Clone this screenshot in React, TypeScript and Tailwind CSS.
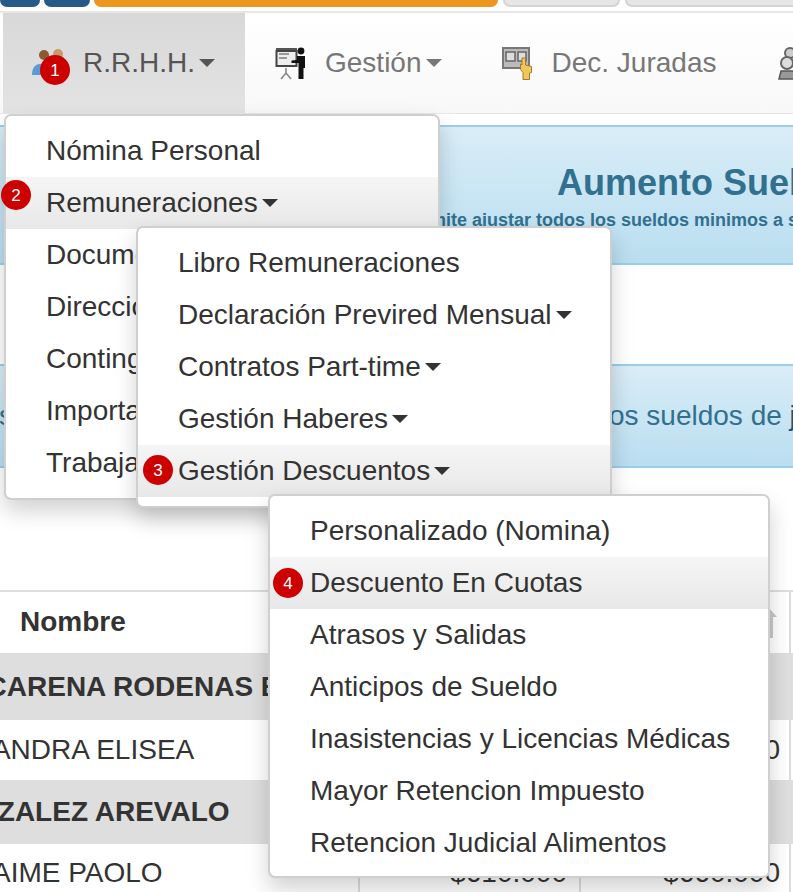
import React from "react";

const FONT = "font-['Liberation_Sans','Arial',sans-serif]";

function Caret({ color = "border-t-[#333]" }: { color?: string }) {
  return <span className={`inline-block ml-[4px] w-0 h-0 border-x-[8px] border-t-[8px] border-x-transparent align-middle ${color}`} />;
}

function Badge({ n, className }: { n: number; className: string }) {
  return (
    <span className={`absolute flex items-center justify-center w-[30px] h-[30px] rounded-full bg-[#cc0000] text-white text-[17px] leading-none ${className}`}>
      {n}
    </span>
  );
}

function PeopleIcon() {
  return (
    <svg width="36" height="30" viewBox="0 0 36 30" className="-ml-[1px]">
      <circle cx="12" cy="7" r="5" fill="#8a5a33" />
      <circle cx="26" cy="6" r="5" fill="#c99a6b" />
      <path d="M0 27c0-7 3-11 8-11s9 4 9 11z" fill="#5a9bd5" />
      <path d="M18 14h14v10H18z" fill="#d9b38c" />
    </svg>
  );
}

function BoardIcon() {
  return (
    <svg width="32" height="33" viewBox="0 0 32 33">
      <rect x="1" y="1" width="21" height="3" fill="#555" />
      <rect x="1.5" y="4" width="20" height="15" fill="#eee" stroke="#444" strokeWidth="2" />
      <path d="M4 7h10M4 11h8" stroke="#999" strokeWidth="2" />
      <path d="M11 21v5M11 26l-5 6M11 26l5 6" stroke="#888" strokeWidth="1.6" fill="none" />
      <circle cx="26" cy="4" r="3.4" fill="#111" />
      <path d="M22 9h8v12h-1.500v11h-5V16l-7 0v-2.500l5.500-.5z" fill="#111" />
    </svg>
  );
}

function HandIcon() {
  return (
    <svg width="32" height="33" viewBox="0 0 32 33">
      <rect x="1" y="1" width="26" height="20" fill="#bbb" stroke="#777" strokeWidth="2" />
      <rect x="4" y="5" width="9" height="9" fill="#ddd" stroke="#666" strokeWidth="1.500" />
      <rect x="16" y="5" width="8" height="9" fill="#ddd" stroke="#666" strokeWidth="1.500" />
      <path d="M20 11h3.500v7l6 1.500v6l-2 .5v6.500H21v-7l-2.500-3V17l1.500 1z" fill="#f2c55f" stroke="#a27d28" strokeWidth="1" />
    </svg>
  );
}

function GearIcon() {
  return (
    <svg width="17" height="33" viewBox="0 0 17 33" className="ml-[2px]">
      <circle cx="12" cy="6" r="5" fill="#ccc" stroke="#666" strokeWidth="2" />
      <circle cx="9" cy="16" r="6" fill="#ddd" stroke="#666" strokeWidth="2" />
      <path d="M3 24h14v8H1z" fill="#999" stroke="#555" strokeWidth="1.500" />
    </svg>
  );
}

function NavItem({ icon, label, caret, active }: { icon: React.ReactNode; label: string; caret?: boolean; active?: boolean }) {
  return (
    <div className={`flex items-center h-full px-[30px] shrink-0 ${active ? "bg-gradient-to-b from-[#d8d8d8] to-[#e3e3e3] text-[#555]" : "text-[#777]"}`}>
      <span className="w-[50px] shrink-0 flex items-center">{icon}</span>
      <span className="whitespace-nowrap">{label}</span>
      {caret && <Caret color={active ? "border-t-[#555]" : "border-t-[#777]"} />}
    </div>
  );
}

function MenuItem({ label, caret, active, badge }: { label: string; caret?: boolean; active?: boolean; badge?: React.ReactNode }) {
  return (
    <div className={`relative h-[52px] flex items-center pl-[40px] whitespace-nowrap ${active ? "bg-gradient-to-b from-[#f5f5f5] to-[#e8e8e8]" : ""}`}>
      {badge}
      {label}
      {caret && <Caret />}
    </div>
  );
}

function Menu({ className, children }: { className: string; children: React.ReactNode }) {
  return (
    <div className={`absolute bg-white border-2 border-[#cfcfcf] rounded-[7px] shadow-[0_11px_22px_rgba(0,0,0,0.18)] text-[28px] text-[#333] ${className}`}>
      {children}
    </div>
  );
}

function Row({ name, bold, h, v1, v2 }: { name: React.ReactNode; bold?: boolean; h: string; v1?: string; v2?: string }) {
  return (
    <div className={`grid grid-cols-[358px_221px_210px_1fr] text-[28px] text-[#333] ${h} ${bold ? "bg-[#dedede] font-bold" : "bg-white"}`}>
      <div className="overflow-hidden whitespace-nowrap flex items-center">{name}</div>
      <div className={`flex items-center justify-end pr-[12px] border-l-2 ${bold ? "border-transparent" : "border-[#ddd]"}`}>{v1}</div>
      <div className={`flex items-center justify-end pr-[9px] border-l-2 ${bold ? "border-transparent" : "border-[#ddd]"}`}>{v2}</div>
      <div className={`border-l-2 ${bold ? "border-transparent" : "border-[#ddd]"}`} />
    </div>
  );
}

export default function App() {
  return (
    <div className={`relative w-[793px] h-[892px] overflow-hidden bg-white ${FONT}`}>
      <div className="flex h-[7px]">
        <div className="w-[40px] shrink-0 bg-[#265a88] rounded-b-[7px]" />
        <div className="w-[46px] shrink-0 ml-[4px] bg-[#265a88] rounded-b-[7px]" />
        <div className="w-[404px] shrink-0 ml-[4px] bg-[#ec971f] rounded-b-[7px]" />
        <div className="w-[117px] shrink-0 ml-[5px] bg-[#e6e6e6] border-x-2 border-b-2 border-[#d4d4d4] rounded-b-[7px]" />
        <div className="w-[180px] shrink-0 ml-[5px] bg-[#e6e6e6] border-x-2 border-b-2 border-[#d4d4d4] rounded-b-[7px]" />
      </div>
      <div className="h-[4px]" />
      <div className="h-[2px] bg-[#e7e7e7]" />

      <div className="flex h-[101px] pl-[3px] text-[28px] overflow-hidden bg-gradient-to-b from-white to-[#f8f8f8] border-b border-[#e7e7e7]">
        <NavItem icon={<PeopleIcon />} label="R.R.H.H." caret active />
        <NavItem icon={<BoardIcon />} label="Gestión" caret />
        <NavItem icon={<HandIcon />} label="Dec. Juradas" />
        <NavItem icon={<GearIcon />} label="" />
      </div>

      <div className="mt-[11px] h-[140px] -mx-[4px] border-2 border-[#9acfea] bg-gradient-to-b from-[#d9edf7] to-[#b9def0] text-[#31708f] font-bold whitespace-nowrap pl-[403px] pt-[33px]">
        <div className="pl-[156px] text-[36px] leading-[46px]">Aumento Sueldos Minimos</div>
        <div className="text-[18px] leading-[20px] mt-[4px]">Permite ajustar todos los sueldos minimos a su valor</div>
      </div>

      <div className="mt-[99px] h-[104px] -mx-[4px] border-2 border-[#9acfea] bg-gradient-to-b from-[#d9edf7] to-[#b9def0] text-[#31708f] text-[28px] whitespace-nowrap flex items-center pl-[1px]">
        <span>s</span>
        <span className="ml-[596px]">os sueldos de <span className="text-[#245269]">j</span></span>
      </div>

      <div className="mt-[122px] border-t-2 border-[#ddd]">
        <div className="grid grid-cols-[358px_221px_210px_1fr] h-[61px] text-[28px] text-[#333] font-bold">
          <div className="flex items-center pl-[20px] pb-[2px]">Nombre</div>
          <div className="border-l-2 border-[#ddd]" />
          <div className="border-l-2 border-[#ddd] flex items-center justify-end pr-[12px]">
            <svg width="16" height="30" viewBox="0 0 16 30">
              <path d="M8 0l8 9h-4v21H4V9H0z" fill="#c8c8c8" />
            </svg>
          </div>
          <div className="border-l-2 border-[#ddd]" />
        </div>
        <Row bold h="h-[67px]" name={<span className="ml-[-57px]">MACARENA RODENAS E</span>} />
        <Row h="h-[60px]" name={<span className="ml-[-75px]">ALEJANDRA ELISEA</span>} v1="$610.000" v2="$660.000" />
        <Row bold h="h-[64px]" name={<span className="ml-[-66px]">GONZALEZ AREVALO</span>} />
        <Row h="h-[58px]" name={<span className="ml-[-22px]">JAIME PAOLO</span>} v1="$610.000" v2="$660.000" />
      </div>

      <Badge n={1} className="left-[40px] top-[55px]" />

      <Menu className="left-[4px] top-[114px] w-[436px] h-[386px] pt-[9px]">
        <MenuItem label="Nómina Personal" />
        <MenuItem label="Remuneraciones" caret active badge={<Badge n={2} className="left-[-5px] top-[3px]" />} />
        <MenuItem label="Documentos" />
        <MenuItem label="Dirección del Trabajo" />
        <MenuItem label="Contingencias" />
        <MenuItem label="Importar" />
        <MenuItem label="Trabajadores" />
      </Menu>

      <Menu className="left-[136px] top-[226px] w-[476px] h-[282px] pt-[9px]">
        <MenuItem label="Libro Remuneraciones" />
        <MenuItem label="Declaración Previred Mensual" caret />
        <MenuItem label="Contratos Part-time" caret />
        <MenuItem label="Gestión Haberes" caret />
        <MenuItem label="Gestión Descuentos" caret active badge={<Badge n={3} className="left-[5px] top-[10px]" />} />
      </Menu>

      <Menu className="left-[268px] top-[494px] w-[502px] h-[384px] pt-[9px]">
        <MenuItem label="Personalizado (Nomina)" />
        <MenuItem label="Descuento En Cuotas" active badge={<Badge n={4} className="left-[3px] top-[11px]" />} />
        <MenuItem label="Atrasos y Salidas" />
        <MenuItem label="Anticipos de Sueldo" />
        <MenuItem label="Inasistencias y Licencias Médicas" />
        <MenuItem label="Mayor Retencion Impuesto" />
        <MenuItem label="Retencion Judicial Alimentos" />
      </Menu>
    </div>
  );
}
